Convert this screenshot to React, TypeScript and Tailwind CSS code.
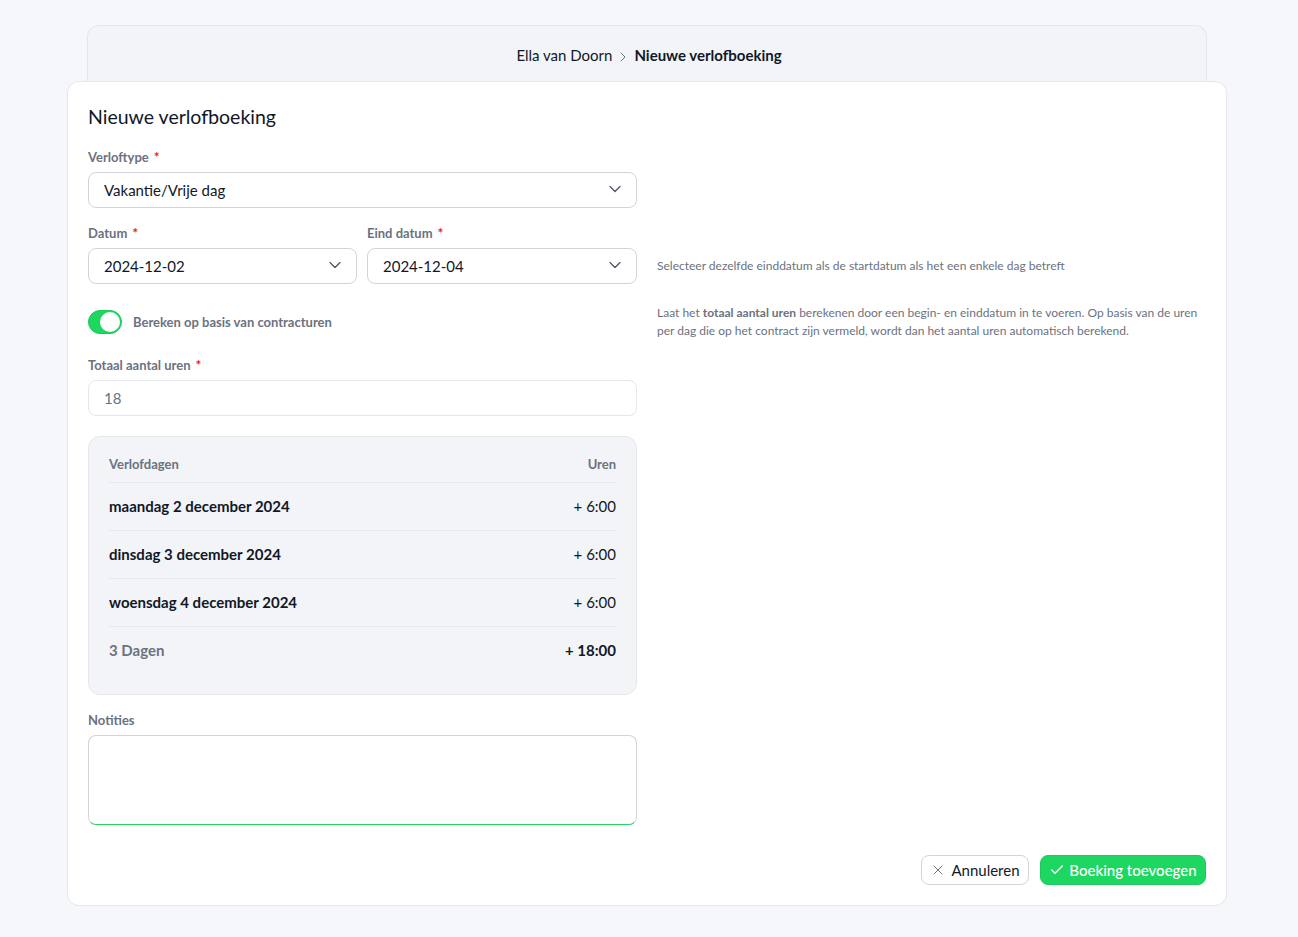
import { Check, ChevronDown, ChevronRight, X } from "lucide-react";

const days = ["maandag 2 december 2024", "dinsdag 3 december 2024", "woensdag 4 december 2024"];

const FieldLabel = ({ text, required }: { text: string; required?: boolean }) => (
  <div className="flex h-[18px] items-center text-[13px] font-bold leading-[18px] text-[#6b7280]">
    {text}
    {required && <span className="ml-[5px] text-[14px] leading-[14px] font-bold text-[#f02020]">*</span>}
  </div>
);

const SelectBox = ({ value }: { value: string }) => (
  <div className="mt-[6px] flex h-[36px] items-center justify-between rounded-[8px] border border-[#d1d5db] bg-white pl-[15px] pr-[11px] text-[15px] text-[#111827]">
    <span>{value}</span>
    <ChevronDown className="-mt-[2px] h-[20px] w-[20px] text-[#4b5563]" strokeWidth={1.5} />
  </div>
);

const App = () => {
  return (
    <div className="min-h-[937px] bg-[#f6f7fb] pt-[25px] pl-[67px] font-['Lato',sans-serif]">
      <div className="ml-[20px] flex h-[57px] w-[1120px] items-center justify-center rounded-t-[12px] border border-b-0 border-[#e5e7eb] bg-[#f3f4f8] pl-[4px] pt-[3px] text-[15px] text-[#111827]">
        <span>Ella van Doorn</span>
        <ChevronRight className="mx-[3px] mt-[3px] h-[16px] w-[16px] text-[#6b7280]" strokeWidth={1.5} />
        <span className="font-bold">Nieuwe verlofboeking</span>
      </div>

      <div className="-mt-[1px] h-[825px] w-[1160px] rounded-[12px] border border-[#e5e7eb] bg-white px-[20px] pt-[21px]">
        <h1 className="text-[19.5px] font-normal leading-[28px] text-[#111827]">Nieuwe verlofboeking</h1>

        <div className="mt-[17px] flex gap-[20px]">
          <div className="w-[549px] shrink-0">
            <FieldLabel text="Verloftype" required />
            <SelectBox value="Vakantie/Vrije dag" />

            <div className="mt-[16px] grid grid-cols-[269px_1fr] gap-[10px]">
              <div>
                <FieldLabel text="Datum" required />
                <SelectBox value="2024-12-02" />
              </div>
              <div>
                <FieldLabel text="Eind datum" required />
                <SelectBox value="2024-12-04" />
              </div>
            </div>

            <div className="mt-[26px] flex items-center gap-[11px]">
              <div className="flex h-[24px] w-[34px] justify-end rounded-full border border-[#1cc95a] bg-[#1ed760] p-[1px]">
                <div className="h-[20px] w-[20px] rounded-full bg-white" />
              </div>
              <span className="mt-[1px] text-[13px] font-bold text-[#6b7280]">Bereken op basis van contracturen</span>
            </div>

            <div className="mt-[22px]">
              <FieldLabel text="Totaal aantal uren" required />
              <div className="mt-[6px] flex h-[36px] items-center rounded-[8px] border border-[#e5e7eb] bg-white px-[15px] text-[15px] text-[#6b7280]">
                18
              </div>
            </div>

            <div className="mt-[20px] h-[259px] rounded-[12px] border border-[#e5e7eb] bg-[#f3f4f8] px-[20px] pt-[17px]">
              <div className="flex h-[28px] items-start justify-between text-[13px] font-bold leading-[20px] text-[#6b7280]">
                <span>Verlofdagen</span>
                <span>Uren</span>
              </div>
              {days.map((day) => (
                <div key={day} className="flex h-[48px] items-center justify-between border-t border-[#e5e7eb] text-[15px] text-[#111827]">
                  <span className="font-bold">{day}</span>
                  <span>+ 6:00</span>
                </div>
              ))}
              <div className="flex h-[48px] items-center justify-between border-t border-[#e5e7eb] text-[15px]">
                <span className="font-bold text-[#6b7280]">3 Dagen</span>
                <span className="font-bold text-[#111827]">+ 18:00</span>
              </div>
            </div>

            <div className="mt-[16px]">
              <FieldLabel text="Notities" />
              <div className="mt-[6px] h-[90px] rounded-[8px] border border-[#d1d5db] border-b-[#22d666] bg-white" />
            </div>
          </div>

          <div className="flex-1 text-[12px] leading-[18px] text-[#6b7280]">
            <p className="mt-[109px]">Selecteer dezelfde einddatum als de startdatum als het een enkele dag betreft</p>
            <p className="mt-[29px]">
              Laat het <span className="font-bold">totaal aantal uren</span> berekenen door een begin- en einddatum in te voeren. Op basis van de uren per dag die op het contract zijn vermeld, wordt dan het aantal uren automatisch berekend.
            </p>
          </div>
        </div>

        <div className="mt-[30px] flex justify-end gap-[11px]">
          <button className="flex h-[30px] w-[108px] items-center justify-center gap-[5px] rounded-[8px] border border-[#d1d5db] bg-white text-[15px] text-[#111827]">
            <X className="h-[16px] w-[16px] text-[#6b7280]" strokeWidth={1.5} />
            Annuleren
          </button>
          <button className="flex h-[30px] w-[166px] items-center justify-center gap-[4px] rounded-[8px] border border-[#1cc95a] bg-[#1ed760] text-[15px] font-medium text-white">
            <Check className="h-[16px] w-[16px]" strokeWidth={2} />
            Boeking toevoegen
          </button>
        </div>
      </div>
    </div>
  );
};

export default App;
